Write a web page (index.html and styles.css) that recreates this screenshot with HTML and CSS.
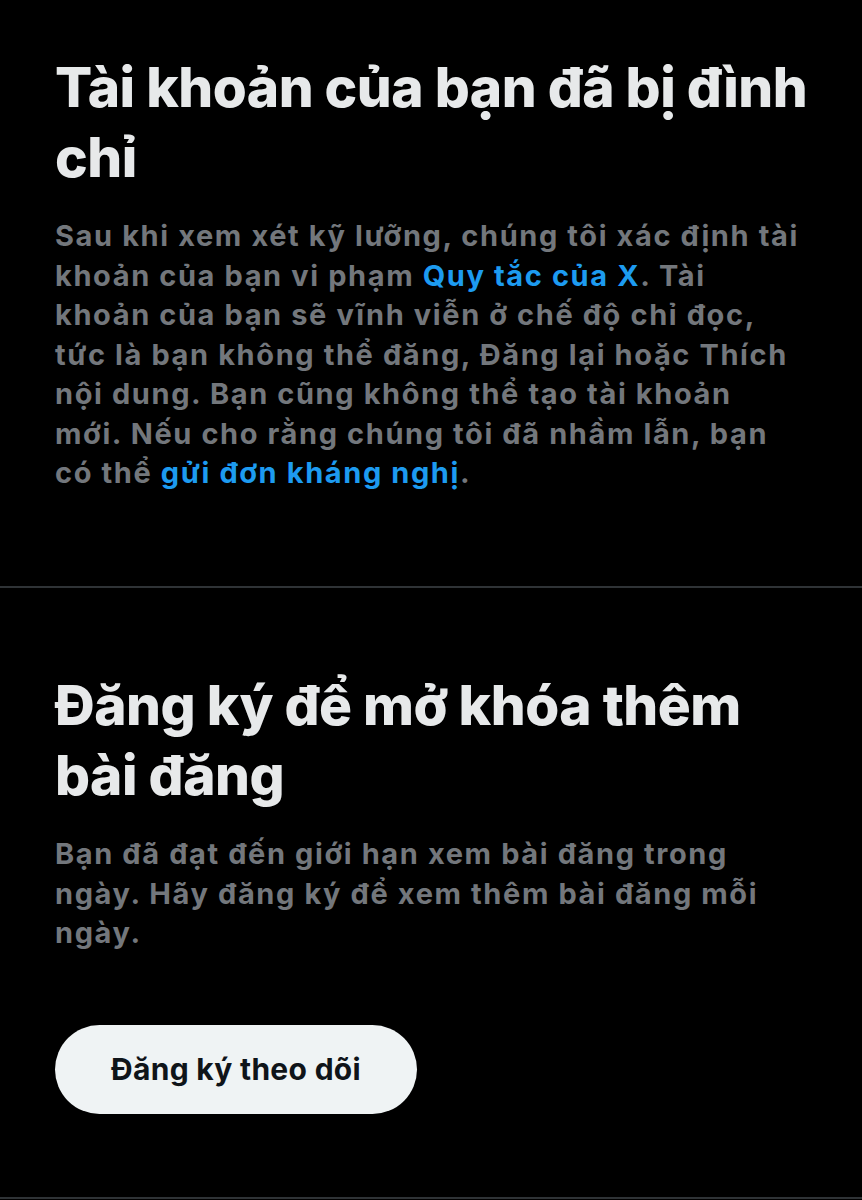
FILE: index.html
```html
<!DOCTYPE html>
<html lang="vi">
<head>
    <meta charset="UTF-8">
    <meta name="viewport" content="width=device-width, initial-scale=1.0">
    <title>Tài khoản bị đình chỉ</title>
    <link rel="stylesheet" href="styles.css">
</head>
<body>
    <section class="panel panel-suspended">
        <h1>Tài khoản của bạn đã bị đình chỉ</h1>
        <p>Sau khi xem xét kỹ lưỡng, chúng tôi xác định tài khoản của bạn vi phạm <a href="#">Quy tắc của X</a>. Tài khoản của bạn sẽ vĩnh viễn ở chế độ chỉ đọc, tức là bạn không thể đăng, Đăng lại hoặc Thích nội dung. Bạn cũng không thể tạo tài khoản mới. Nếu cho rằng chúng tôi đã nhầm lẫn, bạn có thể <a href="#">gửi đơn kháng nghị</a>.</p>
    </section>

    <section class="panel panel-limit">
        <h1>Đăng ký để mở khóa thêm bài đăng</h1>
        <p>Bạn đã đạt đến giới hạn xem bài đăng trong ngày. Hãy đăng ký để xem thêm bài đăng mỗi ngày.</p>
        <button class="subscribe">Đăng ký theo dõi</button>
    </section>
</body>
</html>
```

FILE: styles.css
```css
body {
    margin: 0;
    background-color: #000000;
    color: #e7e9ea;
    font-family: Inter, "Noto Sans", sans-serif;
}

.panel {
    padding: 0 46px 0 55px;
    border-bottom: 2px solid #2f3336;
}

.panel-suspended {
    padding-top: 52px;
    height: 534px;
}

.panel-limit {
    padding-top: 82px;
    height: 527px;
}

h1 {
    margin: 0;
    font-size: 55px;
    font-weight: 800;
    line-height: 70px;
    letter-spacing: -0.5px;
    color: #e7e9ea;
}

p {
    margin: 24px 0 0;
    max-width: 752px;
    font-size: 29px;
    font-weight: 700;
    line-height: 39.5px;
    letter-spacing: 1.6px;
    color: #73777c;
}

a {
    color: #1d9bf0;
    text-decoration: none;
}

.subscribe {
    margin-top: 72px;
    width: 362px;
    height: 89px;
    border: none;
    border-radius: 45px;
    background-color: #eff3f4;
    color: #0f1419;
    font-family: Inter, "Noto Sans", sans-serif;
    font-size: 30px;
    font-weight: 700;
    letter-spacing: 0.3px;
    cursor: pointer;
}
```
